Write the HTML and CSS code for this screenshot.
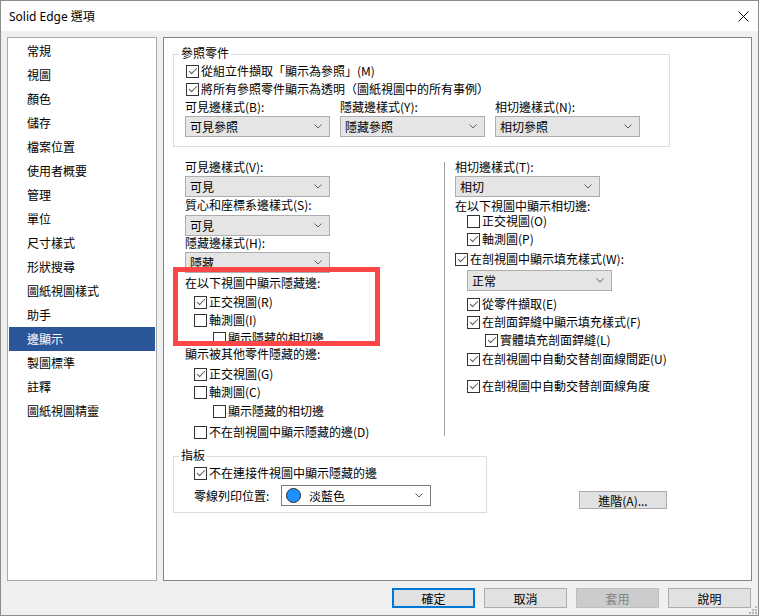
FILE: index.html
```html
<!DOCTYPE html>
<html lang="zh-Hant">
<head>
<meta charset="utf-8">
<title>Solid Edge 選項</title>
<link rel="stylesheet" href="styles.css">
</head>
<body>
<div class="window">
  <div class="titlebar">
    <span class="title">Solid Edge 選項</span>
    <svg class="close" width="11" height="11" viewBox="0 0 11 11"><path d="M0.5 0.5 L10.5 10.5 M10.5 0.5 L0.5 10.5" stroke="#000" stroke-width="1" fill="none"/></svg>
  </div>
  <div class="content">
    <div class="main">
      <ul class="nav">
        <li>常規</li>
        <li>視圖</li>
        <li>顏色</li>
        <li>儲存</li>
        <li>檔案位置</li>
        <li>使用者概要</li>
        <li>管理</li>
        <li>單位</li>
        <li>尺寸樣式</li>
        <li>形狀搜尋</li>
        <li>圖紙視圖樣式</li>
        <li>助手</li>
        <li class="sel">邊顯示</li>
        <li>製圖標準</li>
        <li>註釋</li>
        <li>圖紙視圖精靈</li>
      </ul>
      <div class="panel">
        <div class="group g1">
          <span class="legend">參照零件</span>
          <div class="cbrow i1"><span class="cb on"></span>從組立件擷取「顯示為參照」(M)</div>
          <div class="cbrow i1 m4"><span class="cb on"></span>將所有參照零件顯示為透明（圖紙視圖中的所有事例）</div>
          <div class="ddgrid m4">
            <div>
              <div class="lbl">可見邊樣式(B):</div>
              <div class="dd m2"><span>可見參照</span><svg class="chev" width="8" height="5" viewBox="0 0 8 5"><path d="M0.5 0.5 L4 4 L7.5 0.5" stroke="#606060" fill="none"/></svg></div>
            </div>
            <div>
              <div class="lbl">隱藏邊樣式(Y):</div>
              <div class="dd m2"><span>隱藏參照</span><svg class="chev" width="8" height="5" viewBox="0 0 8 5"><path d="M0.5 0.5 L4 4 L7.5 0.5" stroke="#606060" fill="none"/></svg></div>
            </div>
            <div>
              <div class="lbl">相切邊樣式(N):</div>
              <div class="dd m2"><span>相切參照</span><svg class="chev" width="8" height="5" viewBox="0 0 8 5"><path d="M0.5 0.5 L4 4 L7.5 0.5" stroke="#606060" fill="none"/></svg></div>
            </div>
          </div>
        </div>

        <div class="cols">
          <div class="col left">
            <div class="lbl">可見邊樣式(V):</div>
            <div class="dd m2"><span>可見</span><svg class="chev" width="8" height="5" viewBox="0 0 8 5"><path d="M0.5 0.5 L4 4 L7.5 0.5" stroke="#606060" fill="none"/></svg></div>
            <div class="lbl m1">質心和座標系邊樣式(S):</div>
            <div class="dd m3"><span>可見</span><svg class="chev" width="8" height="5" viewBox="0 0 8 5"><path d="M0.5 0.5 L4 4 L7.5 0.5" stroke="#606060" fill="none"/></svg></div>
            <div class="lbl">隱藏邊樣式(H):</div>
            <div class="dd m2"><span>隱藏</span><svg class="chev" width="8" height="5" viewBox="0 0 8 5"><path d="M0.5 0.5 L4 4 L7.5 0.5" stroke="#606060" fill="none"/></svg></div>
            <div class="lbl m3">在以下視圖中顯示隱藏邊:</div>
            <div class="cbrow m5 i9"><span class="cb on"></span>正交視圖(R)</div>
            <div class="cbrow m4 i9"><span class="cb"></span>軸測圖(I)</div>
            <div class="cbrow m4 i28"><span class="cb"></span>顯示隱藏的相切邊</div>
            <div class="lbl m2">顯示被其他零件隱藏的邊:</div>
            <div class="cbrow m6 i9"><span class="cb on"></span>正交視圖(G)</div>
            <div class="cbrow m4 i9"><span class="cb"></span>軸測圖(C)</div>
            <div class="cbrow m5 i28"><span class="cb"></span>顯示隱藏的相切邊</div>
            <div class="cbrow m7 i9"><span class="cb"></span>不在剖視圖中顯示隱藏的邊(D)</div>
          </div>
          <div class="divider"></div>
          <div class="col right">
            <div class="lbl">相切邊樣式(T):</div>
            <div class="dd m2"><span>相切</span><svg class="chev" width="8" height="5" viewBox="0 0 8 5"><path d="M0.5 0.5 L4 4 L7.5 0.5" stroke="#606060" fill="none"/></svg></div>
            <div class="lbl m2">在以下視圖中顯示相切邊:</div>
            <div class="cbrow m1 i12"><span class="cb"></span>正交視圖(O)</div>
            <div class="cbrow m4 i12"><span class="cb on"></span>軸測圖(P)</div>
            <div class="cbrow m6"><span class="cb on"></span>在剖視圖中顯示填充樣式(W):</div>
            <div class="dd m4 i12"><span>正常</span><svg class="chev" width="8" height="5" viewBox="0 0 8 5"><path d="M0.5 0.5 L4 4 L7.5 0.5" stroke="#606060" fill="none"/></svg></div>
            <div class="cbrow m6 i12"><span class="cb on"></span>從零件擷取(E)</div>
            <div class="cbrow m4 i12"><span class="cb on"></span>在剖面銲縫中顯示填充樣式(F)</div>
            <div class="cbrow m4 i30"><span class="cb on"></span>實體填充剖面銲縫(L)</div>
            <div class="cbrow m5 i12"><span class="cb on"></span>在剖視圖中自動交替剖面線間距(U)</div>
            <div class="cbrow m13 i12"><span class="cb on"></span>在剖視圖中自動交替剖面線角度</div>
          </div>
        </div>

        <div class="bottomrow">
          <div class="group g2">
            <span class="legend">指板</span>
            <div class="cbrow"><span class="cb on"></span>不在連接件視圖中顯示隱藏的邊</div>
            <div class="colorrow">
              <span class="lbl colorlbl">零線列印位置:</span>
              <div class="dd colordd">
                <span class="swatchwrap"><span class="swatch"></span><span>淡藍色</span></span>
                <svg class="chev" width="8" height="5" viewBox="0 0 8 5"><path d="M0.5 0.5 L4 4 L7.5 0.5" stroke="#606060" fill="none"/></svg>
              </div>
            </div>
          </div>
          <button class="btn adv">進階(A)...</button>
        </div>

        <div class="redbox"></div>
      </div>
    </div>
    <div class="footer">
      <button class="btn default">確定</button>
      <button class="btn">取消</button>
      <button class="btn disabled">套用</button>
      <button class="btn">說明</button>
    </div>
  </div>
  <svg class="grip" width="10" height="10" viewBox="0 0 10 10">
    <rect x="8" y="2" width="2" height="2" fill="#b8b8b8"/>
    <rect x="5" y="5" width="2" height="2" fill="#b8b8b8"/>
    <rect x="8" y="5" width="2" height="2" fill="#b8b8b8"/>
    <rect x="2" y="8" width="2" height="2" fill="#b8b8b8"/>
    <rect x="5" y="8" width="2" height="2" fill="#b8b8b8"/>
    <rect x="8" y="8" width="2" height="2" fill="#b8b8b8"/>
  </svg>
</div>
</body>
</html>
```
FILE: styles.css
```css
* { box-sizing: border-box; }

body {
  margin: 0;
  font-family: "Noto Sans CJK TC", "Noto Sans", sans-serif;
  font-size: 12px;
  color: #000;
}

.window {
  width: 759px;
  height: 616px;
  border: 1px solid #8c8c8c;
  background: #f0f0f0;
  display: flex;
  flex-direction: column;
  position: relative;
  overflow: hidden;
}

.titlebar {
  height: 30px;
  flex: none;
  background: #fff;
  display: flex;
  align-items: center;
  justify-content: space-between;
  padding: 0 9px 0 8px;
}

.title {
  font-family: "Noto Sans", "Noto Sans CJK TC", sans-serif;
  font-size: 12px;
}

.content {
  flex: 1;
  padding: 6px 6px 0 6px;
}

.main {
  display: flex;
  gap: 6px;
  height: 544px;
}

.nav {
  width: 150px;
  flex: none;
  margin: 0;
  padding: 1px 0 0 0;
  list-style: none;
  background: #fff;
  border: 1px solid #a9a9a9;
}

.nav li {
  height: 24px;
  line-height: 24px;
  padding-left: 18px;
  margin: 0 1px;
}

.nav li.sel {
  background: #2b579a;
  color: #fff;
}

.panel {
  flex: 1;
  background: #fff;
  border: 1px solid #848484;
  position: relative;
}

/* group boxes */
.group {
  border: 1px solid #dcdcdc;
  position: relative;
}

.legend {
  position: absolute;
  top: -9px;
  left: 5px;
  padding: 0 2px;
  background: #fff;
  height: 14px;
  line-height: 14px;
}

.g1 {
  margin: 16px 0 0 9px;
  width: 497px;
  padding: 9px 0 9px 11px;
}

.ddgrid {
  display: grid;
  grid-template-columns: 145px 145px 145px;
  column-gap: 10px;
}

/* rows */
.lbl {
  height: 14px;
  line-height: 14px;
  white-space: nowrap;
}

.cbrow {
  display: flex;
  align-items: center;
  gap: 2px;
  height: 14px;
  line-height: 14px;
  white-space: nowrap;
}

.cb {
  width: 13px;
  height: 13px;
  flex: none;
  border: 1px solid #333;
  background: #fff;
  position: relative;
}

.cb.on::after {
  content: "";
  position: absolute;
  left: 2px;
  top: 2px;
  width: 7px;
  height: 3px;
  border-left: 1px solid #555;
  border-bottom: 1px solid #555;
  transform: rotate(-45deg);
}

.dd {
  width: 145px;
  height: 21px;
  border: 1px solid #adadad;
  background: #e5e5e5;
  display: flex;
  align-items: center;
  justify-content: space-between;
  padding: 0 7px 0 4px;
  white-space: nowrap;
}

.chev { flex: none; }

/* spacing helpers */
.m1 { margin-top: 1px; }
.m2 { margin-top: 2px; }
.m3 { margin-top: 3px; }
.m4 { margin-top: 4px; }
.m5 { margin-top: 5px; }
.m6 { margin-top: 6px; }
.m7 { margin-top: 7px; }
.m13 { margin-top: 13px; }
.i1 { margin-left: 1px; }
.i9 { margin-left: 9px; }
.i12 { margin-left: 12px; }
.i28 { margin-left: 28px; }
.i30 { margin-left: 30px; }

/* two columns */
.cols {
  display: flex;
  margin: 13px 0 0 21px;
  align-items: flex-start;
}

.col.left { width: 259px; }

.divider {
  width: 1px;
  height: 274px;
  margin-top: 2px;
  background: #a0a0a0;
  flex: none;
}

.col.right { margin-left: 10px; }

/* bottom row */
.bottomrow {
  display: flex;
  align-items: flex-start;
  margin: 17px 0 0 9px;
}

.g2 {
  width: 314px;
  padding: 9px 0 6px 20px;
}

.colorrow {
  display: flex;
  align-items: center;
  margin-top: 5px;
}

.colorlbl { width: 87px; }

.colordd {
  width: 150px;
  background: #fff;
  border-color: #7a7a7a;
  padding-left: 4px;
}

.swatchwrap {
  display: flex;
  align-items: center;
  gap: 8px;
}

.swatch {
  width: 15px;
  height: 15px;
  border-radius: 50%;
  background: #1e90ff;
  border: 1px solid #2a2a2a;
}

/* buttons */
.btn {
  font: inherit;
  color: #000;
  width: 83px;
  height: 20px;
  padding: 0;
  background: #e1e1e1;
  border: 1px solid #adadad;
}

.btn.default { border: 2px solid #0078d7; }

.btn.disabled {
  background: #cccccc;
  border-color: #bfbfbf;
  color: #838383;
}

.btn.adv {
  width: 88px;
  height: 18px;
  margin: 35px 0 0 92px;
}

.footer {
  display: flex;
  justify-content: flex-end;
  gap: 9px;
  margin-top: 7px;
  padding-right: 1px;
}

/* annotation overlay */
.redbox {
  position: absolute;
  left: 9px;
  top: 229px;
  width: 207px;
  height: 79px;
  border: 5px solid #ff4646;
}

.grip {
  position: absolute;
  right: 1px;
  bottom: 1px;
}
```
